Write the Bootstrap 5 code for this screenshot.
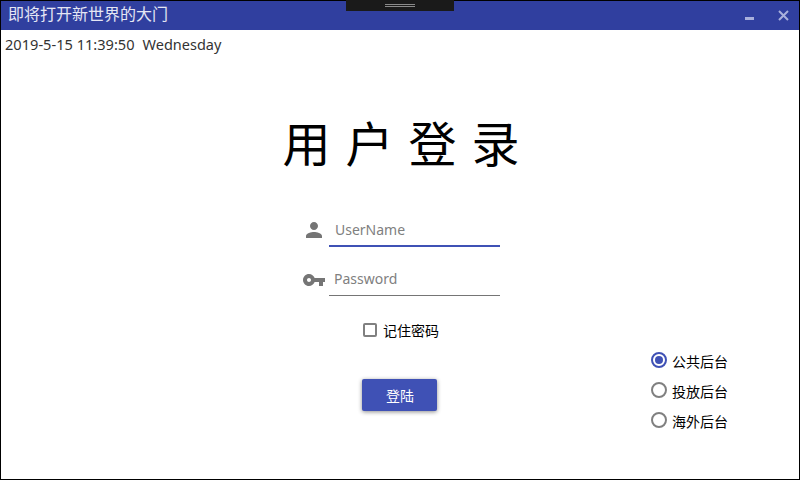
<!doctype html>
<html lang="en">

<head>
  <meta charset="utf-8">
  <meta name="viewport" content="width=device-width, initial-scale=1">
  <title>用户登录</title>
  <link href="https://cdn.jsdelivr.net/npm/bootstrap@5.3.5/dist/css/bootstrap.min.css" rel="stylesheet">
  <style>
    html, body {
      height: 100%;
      overflow: hidden;
    }

    body {
      font-family: "Noto Sans", "Noto Sans CJK SC", sans-serif;
      color: #000;
      background: #fff;
    }

    .login-window {
      width: 800px;
      height: 480px;
      border: 1px solid #000;
      position: relative;
    }

    .title-bar {
      height: 29px;
      background: #303f9f;
      color: #e4e6f4;
      font-size: 16px;
      line-height: 26px;
      padding-left: 7px;
    }

    .notch {
      position: absolute;
      top: -1px;
      left: 345px;
      width: 108px;
      height: 11px;
      background: #1a1a1a;
    }

    .notch::after {
      content: "";
      position: absolute;
      left: 39px;
      top: 4px;
      width: 30px;
      height: 3px;
      border-top: 1px solid #8a8a8a;
      border-bottom: 1px solid #8a8a8a;
    }

    .win-btns {
      gap: 23px;
      padding-right: 10px;
      padding-top: 9px;
    }

    .date-line {
      font-size: 14.5px;
      line-height: 19px;
      color: #333;
      padding: 5px 0 0 4px;
      gap: 8px;
    }

    .date-stamp {
      font-size: 14.6px;
    }

    .big-title {
      font-family: "Noto Sans CJK SC", sans-serif;
      font-size: 48px;
      line-height: 64px;
      letter-spacing: 15px;
      margin: 0 0 0 17px;
      padding-top: 55px;
      font-weight: 400;
      height: 144px;
      text-align: center;
    }

    .field-row {
      width: 198px;
      height: 49px;
      margin-left: 301px;
    }

    .field-icon {
      width: 27px;
      flex: none;
      fill: #757575;
      line-height: 0;
    }

    .user-icon {
      margin-bottom: 5px;
    }

    .key-icon {
      margin-bottom: 4px;
    }

    .field-input {
      flex: 1;
      min-width: 0;
      height: 31px;
      border: 0;
      border-bottom: 1px solid #757575;
      outline: 0;
      border-radius: 0;
      padding: 0 0 3px 5px;
      font-size: 14px;
      color: #757575;
      background: transparent;
    }

    .field-input::placeholder {
      color: #808080;
      opacity: 1;
    }

    .field-input.is-active {
      border-bottom: 2px solid #3f51b5;
      padding-left: 6px;
    }

    .lower-area {
      display: grid;
      grid-template-columns: 348px 100px 350px;
    }

    .remember-row {
      font-size: 14px;
      line-height: 18px;
      gap: 6px;
      height: 20px;
      margin-top: 25px;
      margin-left: 4px;
    }

    .square-box {
      width: 14px;
      height: 14px;
      border: 2px solid #808080;
      border-radius: 2px;
      margin-top: -3px;
    }

    .login-btn {
      width: 75px;
      height: 32px;
      padding: 0 0 0 2px;
      font-size: 14px;
      color: #fff;
      background: #3f51b5;
      border: 0;
      border-radius: 2px;
      box-shadow: 0 1px 4px rgba(0, 0, 0, .45);
      margin-top: 38px;
    }

    .radio-col {
      padding-left: 202px;
      margin-top: 50px;
    }

    .radio-item {
      height: 30px;
      font-size: 14px;
      gap: 5px;
      white-space: nowrap;
    }

    .radio-ring {
      flex: none;
      width: 16px;
      height: 16px;
      border: 2px solid #808080;
      border-radius: 50%;
      margin-top: -2px;
      padding: 2px;
    }

    .radio-ring.is-on {
      border-color: #3f51b5;
    }

    .radio-ring.is-on::before {
      content: "";
      display: block;
      width: 8px;
      height: 8px;
      border-radius: 50%;
      background: #3f51b5;
    }
  </style>
</head>

<body>
  <div class="login-window">
    <div class="title-bar d-flex justify-content-between">
      <div>即将打开新世界的大门</div>
      <div class="win-btns d-flex align-items-start">
        <svg width="10" height="11" viewBox="0 0 10 11"><rect x="0" y="7" width="9" height="3" fill="#a9b0dc"/></svg>
        <svg width="11" height="11" viewBox="0 0 11 11"><path d="M1 1l9 9M10 1l-9 9" stroke="#a9b0dc" stroke-width="2" fill="none"/></svg>
      </div>
    </div>
    <div class="notch"></div>

    <div class="date-line d-flex"><span class="date-stamp">2019-5-15 11:39:50</span><span>Wednesday</span></div>
    <h1 class="big-title">用户登录</h1>

    <div class="field-row d-flex align-items-end">
      <div class="field-icon">
        <svg class="user-icon" width="24" height="24" viewBox="0 0 24 24"><path d="M12 12c2.210 0 4-1.790 4-4s-1.790-4-4-4-4 1.790-4 4 1.790 4 4 4zm0 2c-2.670 0-8 1.340-8 4v2h16v-2c0-2.660-5.330-4-8-4z"/></svg>
      </div>
      <input class="field-input is-active" type="text" placeholder="UserName">
    </div>
    <div class="field-row d-flex align-items-end">
      <div class="field-icon">
        <svg class="key-icon" width="24" height="24" viewBox="0 0 24 24"><path d="M7 14c-1.100 0-2-.9-2-2s.9-2 2-2 2 .9 2 2-.9 2-2 2zm5.650-4C11.830 7.670 9.610 6 7 6c-3.310 0-6 2.690-6 6s2.690 6 6 6c2.610 0 4.830-1.670 5.650-4H17v4h4v-4h2v-4H12.650z"/></svg>
      </div>
      <input class="field-input" type="password" placeholder="Password">
    </div>

    <div class="lower-area">
      <div></div>
      <div class="d-flex flex-column align-items-center">
        <div class="remember-row d-flex align-items-center text-nowrap">
          <span class="square-box"></span>
          <span>记住密码</span>
        </div>
        <button class="login-btn" type="button">登陆</button>
      </div>
      <div class="radio-col">
        <div class="radio-item d-flex align-items-center"><span class="radio-ring is-on"></span><span>公共后台</span></div>
        <div class="radio-item d-flex align-items-center"><span class="radio-ring"></span><span>投放后台</span></div>
        <div class="radio-item d-flex align-items-center"><span class="radio-ring"></span><span>海外后台</span></div>
      </div>
    </div>
  </div>

  <script src="https://cdn.jsdelivr.net/npm/bootstrap@5.3.5/dist/js/bootstrap.bundle.min.js"></script>
</body>

</html>
